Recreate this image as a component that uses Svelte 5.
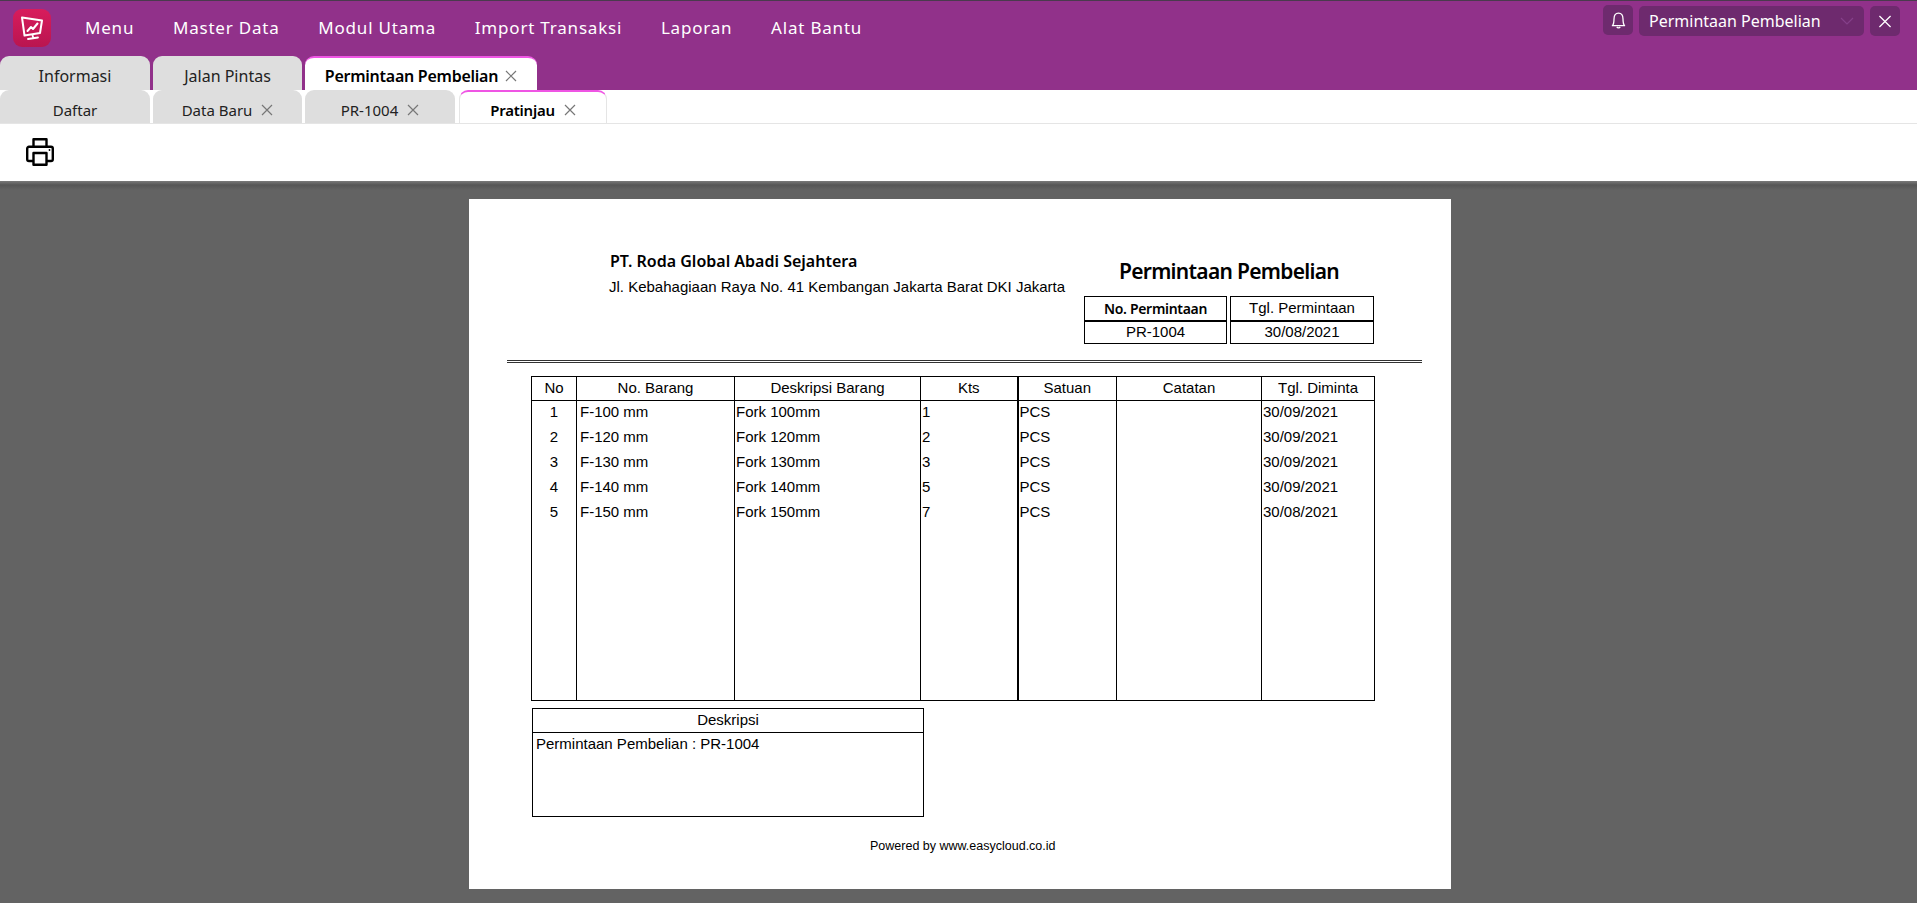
<script>
    const menus = ["Menu", "Master Data", "Modul Utama", "Import Transaksi", "Laporan", "Alat Bantu"];
    const mainTabs = [
        { label: "Informasi" },
        { label: "Jalan Pintas" },
        { label: "Permintaan Pembelian", close: true, active: true }
    ];
    const subTabs = [
        { label: "Daftar" },
        { label: "Data Baru", close: true },
        { label: "PR-1004", close: true },
        { label: "Pratinjau", close: true, active: true }
    ];
    const rows = [
        ["1", "F-100 mm", "Fork 100mm", "1", "PCS", "", "30/09/2021"],
        ["2", "F-120 mm", "Fork 120mm", "2", "PCS", "", "30/09/2021"],
        ["3", "F-130 mm", "Fork 130mm", "3", "PCS", "", "30/09/2021"],
        ["4", "F-140 mm", "Fork 140mm", "5", "PCS", "", "30/09/2021"],
        ["5", "F-150 mm", "Fork 150mm", "7", "PCS", "", "30/08/2021"]
    ];
    const heads = ["No", "No. Barang", "Deskripsi Barang", "Kts", "Satuan", "Catatan", "Tgl. Diminta"];
</script>

<div class="page">
    <header class="topbar">
        <div class="nav">
            <div class="logo">
                <svg viewBox="0 0 38 38" width="38" height="38">
                    <g fill="none" stroke="#fff" stroke-linejoin="round" stroke-linecap="round">
                        <path d="M9 8.5 L29 11.5 L27 24 L11.5 26.5 Z" stroke-width="2" />
                        <path d="M14.5 22 L18 18 L20 20 L24.5 14.5" stroke-width="2" />
                        <path d="M19.5 26 L20 28 M15 30 L25 28.5" stroke-width="1.8" />
                    </g>
                </svg>
            </div>
            {#each menus as m}
                <span class="menu">{m}</span>
            {/each}
        </div>
        <div class="actions">
            <button class="act square bell" aria-label="Notifikasi">
                <svg viewBox="0 0 16 18" width="15" height="17" fill="none" stroke="#fff" stroke-width="1.4">
                    <path d="M1.5 14.5 C3 13 3.2 10 3.2 7.5 C3.2 3.5 5.2 1.2 8 1.2 C10.8 1.2 12.8 3.5 12.8 7.5 C12.8 10 13 13 14.5 14.5 Z" stroke-linejoin="round" />
                    <path d="M6.2 15.8 C7 17.2 9 17.2 9.8 15.8" />
                </svg>
            </button>
            <div class="act select">
                <span>Permintaan Pembelian</span>
                <svg viewBox="0 0 14 8" width="14" height="8" fill="none" stroke="#85408a" stroke-width="1.2">
                    <path d="M1 1 L7 7 L13 1" />
                </svg>
            </div>
            <button class="act square" aria-label="Tutup">
                <svg viewBox="0 0 14 14" width="14" height="13" fill="none" stroke="#fff" stroke-width="1.4">
                    <path d="M1 1 L13 13 M13 1 L1 13" />
                </svg>
            </button>
        </div>
    </header>

    <div class="tabs main-tabs">
        {#each mainTabs as t}
            <div class="tab" class:active={t.active}>
                <span>{t.label}</span>
                {#if t.close}
                    <svg class="x" viewBox="0 0 12 12" width="12" height="12"><path d="M1 1 L11 11 M11 1 L1 11" /></svg>
                {/if}
            </div>
        {/each}
    </div>
    <div class="tabs sub-tabs">
        {#each subTabs as t}
            <div class="tab" class:active={t.active}>
                <span>{t.label}</span>
                {#if t.close}
                    <svg class="x" viewBox="0 0 12 12" width="12" height="12"><path d="M1 1 L11 11 M11 1 L1 11" /></svg>
                {/if}
            </div>
        {/each}
    </div>

    <div class="toolbar">
        <svg viewBox="0 0 28 28" width="28" height="28" fill="none" stroke="#000" stroke-width="2.4" stroke-linejoin="round">
            <path d="M7.5 8.5 V1.2 H20.5 V8.5" />
            <path d="M7.5 23 H3 A1.8 1.8 0 0 1 1.2 21.2 V10.5 A1.8 1.8 0 0 1 3 8.7 H25 A1.8 1.8 0 0 1 26.8 10.5 V21.2 A1.8 1.8 0 0 1 25 23 H20.5" />
            <rect x="7.5" y="15" width="13" height="11.8" />
            <circle cx="23.5" cy="12" r="0.9" fill="#000" stroke="none" />
        </svg>
    </div>

    <main class="viewer">
        <section class="paper">
            <div class="letterhead">
                <div class="company">
                    <h2>PT. Roda Global Abadi Sejahtera</h2>
                    <p>Jl. Kebahagiaan Raya No. 41 Kembangan Jakarta Barat DKI Jakarta</p>
                </div>
                <div class="doc">
                    <h1>Permintaan Pembelian</h1>
                    <div class="doc-boxes">
                        <div class="box first">
                            <div class="box-head strong">No. Permintaan</div>
                            <div class="box-val">PR-1004</div>
                        </div>
                        <div class="box">
                            <div class="box-head">Tgl. Permintaan</div>
                            <div class="box-val">30/08/2021</div>
                        </div>
                    </div>
                </div>
            </div>
            <div class="rule"></div>

            <table class="items">
                <colgroup>
                    <col style="width:45px" />
                    <col style="width:158px" />
                    <col style="width:186px" />
                    <col style="width:97px" />
                    <col style="width:99px" />
                    <col style="width:145px" />
                    <col style="width:113px" />
                </colgroup>
                <thead>
                    <tr>
                        {#each heads as h, i}
                            <th class:thick={i === 4}>{h}</th>
                        {/each}
                    </tr>
                </thead>
                <tbody>
                    {#each rows as r}
                        <tr>
                            {#each r as c, i}
                                <td class:center={i === 0} class:pad={i === 1} class:thick={i === 4}>{c}</td>
                            {/each}
                        </tr>
                    {/each}
                    <tr class="filler">
                        {#each heads as _, i}
                            <td class:thick={i === 4}></td>
                        {/each}
                    </tr>
                </tbody>
            </table>

            <div class="desc">
                <div class="desc-head">Deskripsi</div>
                <div class="desc-body">Permintaan Pembelian : PR-1004</div>
            </div>

            <div class="powered">Powered by www.easycloud.co.id</div>
        </section>
    </main>
</div>

<style>
    :global(body) {
        margin: 0;
        background: #636363;
        overflow: hidden;
    }
    .page {
        width: 1917px;
        height: 903px;
        display: flex;
        flex-direction: column;
        font-family: "Noto Sans", sans-serif;
        overflow: hidden;
    }
    .topbar {
        height: 56px;
        flex: none;
        background: #91318a;
        border-top: 1px solid #4a3a4d;
        display: flex;
        justify-content: space-between;
        box-sizing: border-box;
    }
    .nav {
        display: flex;
        align-items: flex-start;
        padding-left: 13px;
    }
    .logo {
        width: 38px;
        height: 38px;
        margin-top: 8px;
        margin-right: 34px;
        border-radius: 9px;
        background: linear-gradient(180deg, #d81c5c, #b91550);
    }
    .menu {
        color: #fff;
        font-size: 17px;
        letter-spacing: 0.8px;
        margin-right: 38.7px;
        line-height: 24px;
        margin-top: 15px;
    }
    .actions {
        display: flex;
        gap: 6px;
        padding: 5px 17px 0 0;
    }
    .act {
        height: 30px;
        background: #6e2a6e;
        border: none;
        border-radius: 5px;
        padding: 0;
        display: flex;
        align-items: center;
        box-sizing: border-box;
    }
    .square {
        width: 30px;
        justify-content: center;
    }
    .bell {
        margin-top: -1px;
    }
    .select {
        width: 225px;
        padding: 0 10px;
        justify-content: space-between;
        color: #fff;
        font-size: 16px;
    }
    .tabs {
        display: flex;
        flex: none;
        height: 34px;
        box-sizing: border-box;
    }
    .main-tabs {
        background: #91318a;
    }
    .sub-tabs {
        background: #fff;
        border-bottom: 1px solid #e5e5e5;
    }
    .tab {
        width: 150px;
        margin-right: 3px;
        padding-top: 6px;
        background: #dedede;
        border-radius: 9px 9px 0 0;
        display: flex;
        align-items: center;
        justify-content: center;
        gap: 7px;
        color: #222;
        font-size: 16px;
        box-sizing: border-box;
    }
    .tab:nth-child(2) {
        width: 149px;
    }
    .tab.active {
        width: 232px;
        padding-top: 3px;
        background: #fff;
        color: #000;
        font-weight: 600;
        letter-spacing: -0.25px;
        border-top: 2px solid #ef55e4;
    }
    .sub-tabs .tab {
        font-size: 15px;
        padding-top: 6px;
        gap: 9px;
    }
    .sub-tabs .tab:nth-child(3) {
        margin-right: 4px;
    }
    .sub-tabs .tab.active {
        width: 148px;
        padding-top: 5px;
        border-right: 1px solid #e5e5e5;
        border-left: 1px solid #e5e5e5;
    }
    .x {
        fill: none;
        stroke: #777;
        stroke-width: 1.2;
    }
    .toolbar {
        height: 57px;
        flex: none;
        background: #fff;
        box-sizing: border-box;
        padding: 14px 0 0 26px;
    }
    .viewer {
        flex: 1;
        padding: 18px 0 0 469px;
        background: linear-gradient(180deg, #7a7a7a 0, #565656 4px, #636363 9px);
    }
    .paper {
        width: 982px;
        height: 690px;
        background: #fff;
        box-sizing: border-box;
        padding: 0 0 0 38px;
        color: #000;
        font-family: "Liberation Sans", Arial, sans-serif;
    }
    .letterhead {
        display: flex;
        height: 161px;
    }
    .company {
        width: 577px;
        padding: 50px 0 0 103px;
        box-sizing: border-box;
    }
    .company h2 {
        margin: 0;
        font: 600 16px/24px "Noto Sans", sans-serif;
    }
    .company p {
        margin: 3px 0 0 -1px;
        font-size: 15px;
        line-height: 22px;
        white-space: nowrap;
    }
    .doc {
        width: 290px;
        padding-top: 56px;
        box-sizing: border-box;
    }
    .doc h1 {
        margin: 0;
        font: 600 21px/32px "Noto Sans", sans-serif;
        letter-spacing: -0.7px;
        text-align: center;
    }
    .doc-boxes {
        display: flex;
        gap: 3px;
        margin-top: 9px;
    }
    .box {
        width: 144px;
        height: 48px;
        border: 1px solid #000;
        box-sizing: border-box;
        text-align: center;
        font-size: 15px;
        line-height: 22px;
    }
    .box.first {
        width: 143px;
    }
    .box-head {
        height: 23px;
        border-bottom: 2px solid #000;
    }
    .box-head.strong {
        font: 600 14px/24px "Noto Sans", sans-serif;
        letter-spacing: -0.3px;
    }
    .box-val {
        margin-top: -1px;
    }
    .rule {
        width: 915px;
        height: 3px;
        border-top: 1px solid #333;
        border-bottom: 1px solid #333;
        box-sizing: border-box;
    }
    .items {
        border-collapse: collapse;
        table-layout: fixed;
        width: 843px;
        margin: 13px 0 0 24px;
        font-size: 15px;
    }
    .items th {
        font-weight: 400;
        height: 21px;
        padding: 0 0 2px;
        border: 1px solid #000;
        text-align: center;
    }
    .items td {
        height: 20px;
        padding: 0 0 5px 1px;
        border-left: 1px solid #000;
        border-right: 1px solid #000;
    }
    .items .thick {
        border-left: 2px solid #000;
    }
    .items td.center {
        text-align: center;
        padding-left: 0;
    }
    .items td.pad {
        padding-left: 3px;
    }
    .items .filler td {
        height: 169px;
        border-bottom: 1px solid #000;
    }
    .desc {
        width: 392px;
        height: 109px;
        margin: 7px 0 0 25px;
        border: 1px solid #000;
        box-sizing: border-box;
        font-size: 15px;
    }
    .desc-head {
        height: 24px;
        line-height: 22px;
        text-align: center;
        border-bottom: 1px solid #000;
        box-sizing: border-box;
    }
    .desc-body {
        padding: 0 3px;
        line-height: 22px;
    }
    .powered {
        margin: 20px 0 0 363px;
        font-size: 12.5px;
        line-height: 18px;
    }
</style>
